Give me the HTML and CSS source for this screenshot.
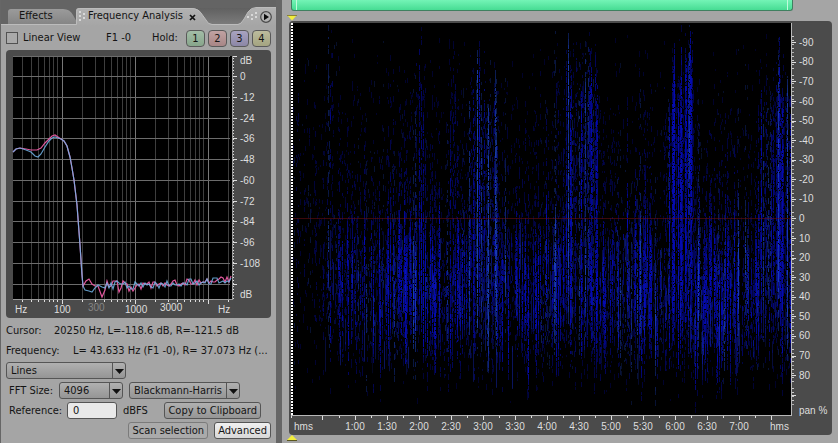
FILE: index.html
```html
<!DOCTYPE html>
<html lang="en">
<head>
<meta charset="utf-8">
<title>Frequency Analysis</title>
<link rel="stylesheet" href="styles.css">
</head>
<body>
<div class="workspace">
  <aside class="analysis">
    <div class="tabs">
      <svg class="tabs-shape" viewBox="0 0 275 26" aria-hidden="true">
        <defs>
          <linearGradient id="tabOn" x1="0" y1="0" x2="0" y2="1"><stop offset="0" stop-color="#b2b2b2"/><stop offset="1" stop-color="#a5a5a5"/></linearGradient>
          <linearGradient id="tabOff" x1="0" y1="0" x2="0" y2="1"><stop offset="0" stop-color="#9b9b9b"/><stop offset="1" stop-color="#858585"/></linearGradient>
          <linearGradient id="gap" x1="0" y1="0" x2="0" y2="1"><stop offset="0" stop-color="#606060"/><stop offset="1" stop-color="#7b7b7b"/></linearGradient>
        </defs>
        <path d="M190 8H250V24H190z" fill="url(#gap)"/>
        <path d="M7 24V12Q7 9 10 9H62Q69 9 72 15L77 24z" fill="url(#tabOff)"/>
        <path d="M0 26V24H75V11Q75 8 78 8H190Q197 8 200 13L205 20Q207 24 211 24H237Q240 24 243 19L247 12Q250 8 255 8H275V26z" fill="url(#tabOn)"/>
        <path d="M0 24.500H75.500V11.500Q75.500 8.500 78.500 8.500H190Q197 8.500 200 13L205 20Q207 24.500 211 24.500H237Q240 24.500 243 19L247 12Q250 7.500 255 7.500H275" fill="none" stroke="#bcbcbc"/>
        <g fill="#d8d8d8">
          <path d="M78 11h2v2h-2zM82 13h2v2h-2zM78 15h2v2h-2zM82 17h2v2h-2zM78 19h2v2h-2zM254 12h2v2h-2zM250 14h2v2h-2zM254 16h2v2h-2zM246 16h2v2h-2zM250 18h2v2h-2z"/>
        </g>
      </svg>
      <button class="tab tab-off" type="button">Effects</button>
      <button class="tab tab-on" type="button">Frequency Analysis</button>
      <button class="icon close" type="button" aria-label="Close"><svg width="7" height="7" viewBox="0 0 7 7"><path d="M1 1L6 6M6 1L1 6" stroke="#111" stroke-width="1.700"/></svg></button>
      <button class="icon more" type="button" aria-label="Panel menu"><svg width="12" height="12" viewBox="0 0 12 12"><circle cx="6" cy="6" r="5.300" fill="#b4b4b4" stroke="#4b4b4b" stroke-width="1.200"/><path d="M4 2.700L9 6L4 9.300z" fill="#0c0c0c"/></svg></button>
    </div>

    <div class="holds">
      <label class="linear"><input type="checkbox" class="tick">Linear View</label>
      <span class="note">F1 -0</span>
      <span>Hold:</span>
      <div class="hold-set">
        <button type="button" class="hold green">1</button>
        <button type="button" class="hold red">2</button>
        <button type="button" class="hold violet">3</button>
        <button type="button" class="hold olive">4</button>
      </div>
    </div>

    <svg class="response" id="response" viewBox="0 0 265 268" role="img" aria-label="Frequency response"></svg>

    <dl class="readout">
      <div><dt>Cursor:</dt><dd class="near">20250 Hz, L=-118.6 dB, R=-121.5 dB</dd></div>
      <div><dt>Frequency:</dt><dd>L= 43.633 Hz (F1 -0), R= 37.073 Hz (...</dd></div>
    </dl>

    <div class="form">
      <div class="row">
        <span class="pick w-lines"><select aria-label="Display style"><option>Lines</option></select><svg class="arrow" viewBox="0 0 14 17"><path d="M.5 0V17" stroke="#555"/><path d="M3 7H12L7.500 12z" fill="#111"/></svg></span>
      </div>
      <div class="row inset">
        <label for="fft" class="w-fft">FFT Size:</label>
        <span class="pick w-size"><select id="fft"><option>4096</option></select><svg class="arrow" viewBox="0 0 14 17"><path d="M.5 0V17" stroke="#555"/><path d="M3 7H12L7.500 12z" fill="#111"/></svg></span>
        <span class="pick w-window"><select aria-label="Window function"><option>Blackmann-Harris</option></select><svg class="arrow" viewBox="0 0 14 17"><path d="M.5 0V17" stroke="#555"/><path d="M3 7H12L7.500 12z" fill="#111"/></svg></span>
      </div>
      <div class="row inset">
        <label for="ref" class="w-ref">Reference:</label>
        <input id="ref" class="field" type="text" value="0">
        <span>dBFS</span>
        <button type="button" class="btn copy">Copy to Clipboard</button>
      </div>
      <div class="row end">
        <button type="button" class="btn faint">Scan selection</button>
        <button type="button" class="btn lit">Advanced</button>
      </div>
    </div>
  </aside>

  <main class="editor">
    <div class="range"><i></i><i></i></div>
    <svg class="marker" viewBox="0 0 10 6" aria-hidden="true"><path d="M0 0H10L5 5.500z" fill="#f2ee3c"/><path d="M0 .5H10" stroke="#8c8530"/></svg>
    <div class="view">
      <div class="plot"><canvas id="spectrum"></canvas></div>
      <div class="pan" id="pan"></div>
      <div class="time" id="time"></div>
    </div>
    <svg class="marker" viewBox="0 0 10 6" aria-hidden="true"><path d="M5 0L10 5H0z" fill="#f2ee3c"/><path d="M0 5.500H10" stroke="#5c5820"/></svg>
  </main>
</div>
<script src="app.js"></script>
</body>
</html>
```

FILE: styles.css
```css
* { box-sizing: border-box; }

body {
  margin: 0;
  background: #666;
  color: #141414;
  font: 11px/16px "DejaVu Sans Condensed", "DejaVu Sans", sans-serif;
}

button, input, select { font: inherit; color: inherit; margin: 0; }
button { cursor: pointer; }

.workspace {
  display: grid;
  grid-template-columns: 275px minmax(0, 1fr);
  gap: 6px;
  min-height: 100vh;
  padding-left: 1px;
}

/* analysis panel */
.analysis {
  display: flex;
  flex-direction: column;
  background: #a5a5a5;
}

.tabs {
  position: relative;
  display: flex;
  align-items: flex-start;
  height: 26px;
  padding: 8px 4px 0 18px;
  background: #646464;
}
.tabs-shape { position: absolute; inset: 0; width: 100%; height: 100%; }
.tab, .icon { position: relative; padding: 0; border: 0; background: none; }
.tab-off { width: 69px; text-align: left; }
.icon { display: flex; }
.close { margin: 6px 0 0 6px; }
.more { margin: 3px 0 0 auto; }

.holds {
  display: flex;
  align-items: center;
  height: 24px;
  padding: 0 5px;
}
.linear { display: flex; align-items: center; gap: 5px; width: 100px; }
.tick {
  appearance: none;
  width: 12px;
  height: 12px;
  border: 1px solid #515151;
  background: #aaa;
}
.note { width: 46px; }
.hold-set { display: flex; gap: 3px; margin-left: auto; }
.hold {
  width: 19px;
  height: 17px;
  padding: 0;
  border: 1px solid #5a5a5a;
  border-radius: 4px;
  line-height: 15px;
}
.green { background: linear-gradient(#a3bda7, #87a58b); }
.red { background: linear-gradient(#c0a2a2, #a88686); }
.violet { background: linear-gradient(#a8a3c0, #8c87a6); }
.olive { background: linear-gradient(#bcbc9d, #a4a481); }

.response {
  display: block;
  height: 268px;
  margin: 0 5px;
  border-radius: 4px;
  background: #4b4b4b;
}
.response text { font: 10px "Liberation Sans", sans-serif; fill: #dedede; }
.response .dim { fill: #858585; }

.readout { margin: 3px 5px 0; }
.readout div { display: flex; height: 20px; align-items: center; white-space: nowrap; }
.readout dt { width: 67px; }
.readout dt:has(+ .near) { width: 48px; }
.readout dd { margin: 0; }

.form { display: flex; flex-direction: column; gap: 3px; padding: 1px 5px 0; }
.row { display: flex; align-items: center; gap: 6px; height: 17px; white-space: nowrap; }
.inset { padding-left: 3px; }
.end { justify-content: flex-end; }
.w-fft { width: 44px; }
.w-ref { width: 52px; }
.w-lines { width: 120px; }
.w-size { width: 64px; }
.w-window { width: 111px; }

.pick { display: grid; height: 17px; }
.pick > * { grid-area: 1 / 1; }
.pick select, .btn {
  height: 17px;
  border: 1px solid #555;
  border-radius: 3px;
  background: linear-gradient(#b0b0b0, #959595);
  line-height: 15px;
}
.pick select { appearance: none; width: 100%; padding: 0 4px; outline: 0; }
.arrow { width: 14px; height: 17px; justify-self: end; pointer-events: none; }
.field {
  width: 50px;
  height: 17px;
  padding: 0 5px;
  border: 1px solid #555;
  border-radius: 3px;
  background: #e9e9e9;
}
.btn { padding: 0 3px; }
.copy { margin-left: auto; margin-right: 10px; }
.faint { border-color: #7b7b7b; background: #aaa; }
.lit { background: linear-gradient(#f0f0f0, #d8d8d8); }

/* spectral editor */
.editor {
  display: flex;
  flex-direction: column;
  padding: 0 6px 2px 7px;
  background: #a5a5a5;
}
.range {
  display: flex;
  justify-content: space-between;
  height: 11px;
  margin: 0 39px 4px 2px;
  padding: 0 4px;
  border: 1px solid #3f8060;
  border-top: 0;
  border-radius: 0 0 3px 3px;
  background: linear-gradient(#74f4b6, #47dc93);
}
.range i { width: 1px; background: #c0fbdc; }
.marker { width: 10px; height: 6px; margin-left: -2px; }
.view {
  display: grid;
  grid-template: minmax(0, 1fr) 19px / minmax(0, 1fr) 40px;
  flex: 1;
  padding: 2px 0 0 2px;
  border-radius: 4px;
  background: #4b4b4b;
  color: #dedede;
  font: 10px/12px "Liberation Sans", sans-serif;
}
.plot {
  position: relative;
  background: #000;
  border-right: 1px solid #b8b8b8;
  border-bottom: 1px solid #b8b8b8;
}
.plot canvas { position: absolute; inset: 0; width: 100%; height: 100%; }

.pan { display: flex; flex-direction: column; padding-top: 10px; }
.pan div {
  display: flex;
  flex: 1;
  align-items: center;
  gap: 3px;
  background: repeating-linear-gradient(#0000 0 3px, #c8c8c8 3px 4px) left / 2px 100% no-repeat;
}
.pan div::before { content: ""; width: 4px; height: 1px; background: #dedede; }
.pan p { margin: 0; height: 11px; padding-left: 7px; white-space: nowrap; }

.time { display: flex; text-align: center; }
.time div { flex: 32 0 0; min-width: 0; padding-top: 5px; background: linear-gradient(#dedede, #dedede) center top / 1px 4px no-repeat, linear-gradient(#dedede, #dedede) left top / 1px 2px no-repeat; }
.time .first { flex-grow: 48; text-indent: 3px; text-align: left; background-position: 66% 0, 0 0; }
.time .last { flex-grow: 37; text-indent: 12px; background-position: 44% 0, 0 0; }
```

FILE: app.js
```js
// Seeded generator so every load draws the same noise.
let seed = 4711;
function rnd() {
  seed = (seed * 1664525 + 1013904223) >>> 0;
  return seed / 4294967296;
}

// Frequency response, in the chart's own coordinates.
function drawResponse() {
  const L = 7, R = 226, T = 6, B = 249;
  let s = `<rect x="${L}" y="${T}" width="${R - L}" height="${B - T}" fill="#000"/>`;
  const line = (x1, y1, x2, y2, c) =>
    `<path d="M${x1} ${y1}L${x2} ${y2}" stroke="${c}" fill="none"/>`;
  const minors = [21, 34, 43, 50, 56, 61, 65, 69];
  for (const decade of [-17, 56, 129, 202]) {
    for (const m of minors) {
      const x = decade + m - 0.5;
      if (x > L && x < R) {
        s += line(x, T, x, B, "#3e3e3e") + line(x, B + 1, x, B + 3, "#dedede");
      }
    }
  }
  for (const x of [56.5, 129.5, 202.5]) {
    s += line(x, T, x, B, "#777") + line(x, B + 1, x, B + 5, "#dedede");
  }
  const rows = [6, 26, 47, 68, 88, 109, 130, 151, 171, 192, 213, 234];
  for (const y of rows) {
    s += line(L, y + 0.5, R - 2, y + 0.5, "#6c6c6c") + line(R + 1, y + 0.5, R + 5, y + 0.5, "#dedede");
  }
  s += line(L, B + 0.5, R + 1, B + 0.5, "#999") + line(R + 0.5, T, R + 0.5, B, "#999");
  for (let y = T + 2; y < B; y += 3) s += line(R + 1, y + 0.5, R + 2, y + 0.5, "#dedede");
  const tail = [[58, 91], [61, 96], [64, 107], [66, 118], [68, 130], [71, 155], [74, 195], [76, 225], [77, 236]];
  const pink = [[7, 102], [10, 99], [14, 98], [20, 99], [25, 100], [31, 100], [35, 98], [39, 93], [43, 89], [46, 86], [49, 85], [52, 87], [55, 89], ...tail, [80, 231], [83, 229], [86, 234], [89, 236], [92, 236], [96, 247], [99, 240]];
  const blue = [[7, 102], [10, 99], [14, 98], [20, 100], [25, 102], [29, 106], [32, 107], [35, 104], [39, 97], [43, 91], [46, 88], [49, 87], [52, 88], [55, 89], ...tail, [79, 240], [83, 241], [86, 242], [89, 238], [92, 235], [96, 237], [99, 238]];
  for (const [pts, colour] of [[pink, "#df579c"], [blue, "#72b4e8"]]) {
    for (let x = 101; x <= 225; x += 2) {
      const mid = x < 140 ? 236 : 236 - (x - 140) * 0.08;
      const swing = x < 130 ? 12 : 7;
      pts.push([x, Math.round(mid + (rnd() - 0.5) * swing)]);
    }
    const fade = colour === "#72b4e8" ? 0.85 : 1;
    s += `<polyline points="${pts.join(" ")}" fill="none" stroke="${colour}" stroke-opacity="${fade}" stroke-width="1.200"/>`;
  }
  const text = (x, y, t, c = "") => `<text x="${x}" y="${y}" class="${c}">${t}</text>`;
  s += text(234, 14, "dB") + text(234, 248, "dB");
  ["0", "-12", "-24", "-36", "-48", "-60", "-72", "-84", "-96", "-108"].forEach((t, i) => {
    s += text(234, rows[i + 1] + 4, t);
  });
  s += text(9, 263, "Hz") + text(48, 263, "100") + text(82, 261, "300", "dim");
  s += text(119, 263, "1000") + text(154, 261, "3000") + text(212, 263, "Hz");
  document.getElementById("response").innerHTML = s;
}

// Bursts: centre, half width, top, bottom, strength (501 x 393 units).
const bursts = [
  [185, 7, 25, 250, 0.3], [197, 10, 35, 250, 0.36], [281, 6, 15, 250, 0.4],
  [298, 10, 20, 200, 0.36], [381, 6, 35, 215, 0.38], [393, 8, 20, 225, 0.38],
  [478, 9, 60, 260, 0.36], [492, 8, 20, 250, 0.42], [161, 3, 10, 200, 0.16],
  [129, 3, 5, 220, 0.14], [342, 4, 130, 280, 0.22], [40, 1, 5, 110, 0.2],
  [265, 2, 15, 90, 0.12], [400, 1, 2, 200, 0.4]
];
const ramp = (v, a, b) => Math.max(0, Math.min(1, (v - a) / (b - a)));

function density(x, y) {
  let d = 0.06 * ramp(y, 20, 100) + 0.12 * ramp(y, 100, 220) * ramp(x, 10, 60);
  d += 0.36 * ramp(y, 195, 255) * ramp(x, 25, 65);
  d *= 1 - ramp(y, 275, 355);
  for (const [cx, hw, top, bottom, k] of bursts) {
    const near = 1 - Math.abs(x - cx) / (hw + 3);
    if (near > 0) {
      d += k * Math.min(1, near * 2) * ramp(y, top, top + 60) * (1 - ramp(y, bottom - 50, bottom + 30));
    }
  }
  return d;
}

function drawSpectrum() {
  const canvas = document.getElementById("spectrum");
  const w = canvas.width = canvas.clientWidth;
  const h = canvas.height = canvas.clientHeight;
  const c = canvas.getContext("2d");
  seed = 90210;
  for (let x = 2; x < w; x++) {
    const gain = 0.3 + Math.pow(rnd(), 2) * 1.7;
    const shift = (rnd() - 0.5) * 70;
    const tint = rnd() < 0.18 ? 60 : 10;
    const ux = x * 501 / w;
    for (let y = 2; y < h;) {
      const run = 2 + Math.floor(rnd() * 5);
      const d = density(ux, y * 393 / h + shift) * gain;
      if (rnd() < d * 1.9) {
        const v = Math.min(1, 0.22 + d * 0.4 + d * rnd());
        c.fillStyle = `rgb(${tint * 0.4 * v},${tint * v},${175 * v})`;
        c.fillRect(x, y, 1, run);
      }
      y += run + (rnd() < 0.4 ? 1 : 0);
    }
    // long single tones that stretch beyond the main band
    if (rnd() < 0.34 && ux > 30) {
      const top = 200 + rnd() * 125;
      c.fillStyle = `rgba(20,40,190,${0.15 + rnd() * 0.4})`;
      c.fillRect(x, top * h / 393, 1, 10 + rnd() * 38);
    }
  }
  c.fillStyle = "rgba(110,15,20,.55)";
  c.fillRect(0, Math.round(h / 2) - 1, w, 1);
  c.fillStyle = "#fff";
  for (let y = 0; y < h; y += 3) c.fillRect(0, y, 2, 2);
}

function drawAxes() {
  let s = "";
  for (let v = -90; v <= 90; v += 10) s += `<div>${v === 90 ? "" : v}</div>`;
  document.getElementById("pan").innerHTML = s + "<p>pan %</p>";
  s = '<div class="first">hms</div>';
  for (let t = 2; t <= 14; t++) s += `<div>${Math.floor(t / 2)}:${t % 2 ? "30" : "00"}</div>`;
  document.getElementById("time").innerHTML = s + '<div class="last">hms</div>';
}

drawResponse();
drawAxes();
drawSpectrum();
window.addEventListener("resize", drawSpectrum);
```
